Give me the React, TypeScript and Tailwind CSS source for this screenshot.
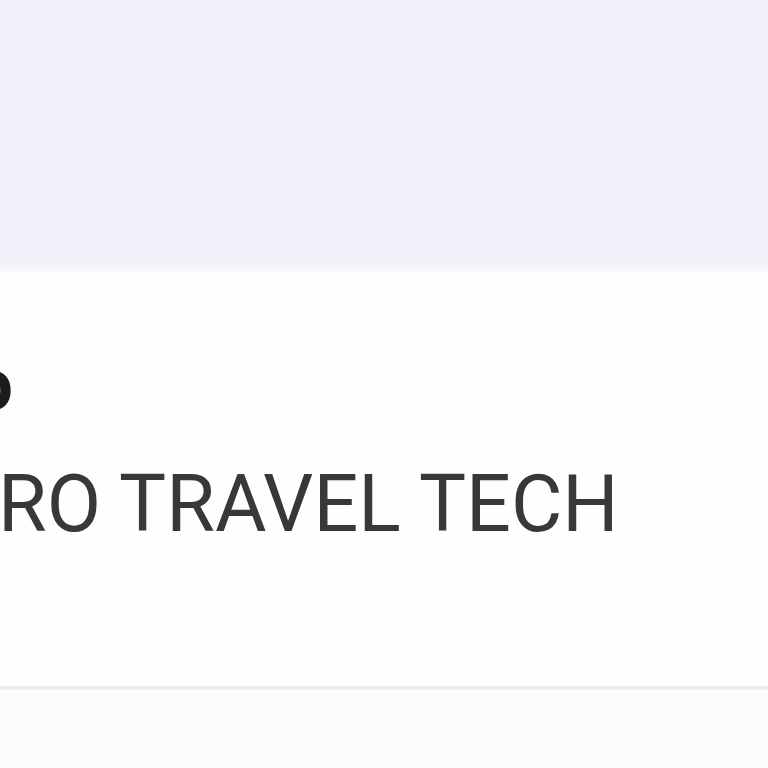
export default function App() {
  return (
    <div className="w-[768px] h-[768px] overflow-hidden bg-[#fcfcfc] flex flex-col" style={{ fontFamily: "Roboto, 'Liberation Sans', sans-serif" }}>
      <div className="h-[264px] shrink-0 bg-[#f1f1fa]" />
      <div className="h-[10px] shrink-0 bg-gradient-to-b from-[#f1f1fa] to-[#fefefc]" />
      <div className="h-[412px] shrink-0 bg-[#fefefc] flex flex-col pt-[74px]">
        <div className="w-[13px] flex justify-end">
          <span className="whitespace-nowrap text-[74px] leading-none font-bold text-[#1c1c1c] blur-[0.6px]">Expo</span>
        </div>
        <div className="mt-[43px] -ml-[2px] whitespace-nowrap text-[79px] leading-none text-[#383838] blur-[0.5px]">
          RO TRAVEL TECH
        </div>
      </div>
      <div className="h-[4px] shrink-0 bg-gradient-to-b from-[#f3f3f3] via-[#e9e9e9] to-[#f6f6f6]" />
      <div className="flex-1 bg-[#fcfcfc]" />
    </div>
  );
}
